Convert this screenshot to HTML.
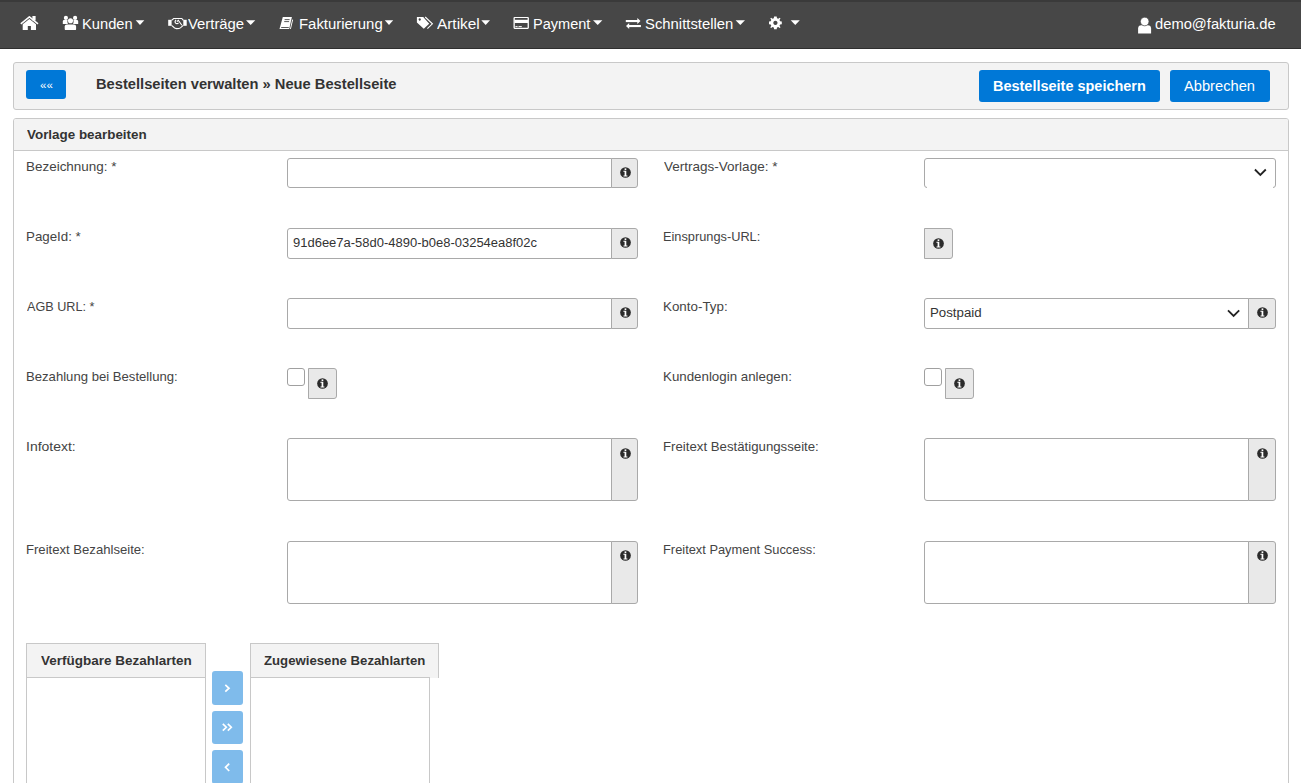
<!DOCTYPE html>
<html><head><meta charset="utf-8">
<style>
*{box-sizing:border-box}
html,body{margin:0;padding:0}
body{width:1301px;height:783px;overflow:hidden;position:relative;background:#fff;font-family:"Liberation Sans",sans-serif}
.a{position:absolute}
.tx{position:absolute;white-space:nowrap;line-height:1;transform-origin:0 0}
.btn{position:absolute;background:#0078d7;border-radius:3px}
.inp{position:absolute;background:#fff;border:1px solid #a9a9a9;border-radius:3px 0 0 3px}
.add{position:absolute;background:#e9e9e9;border:1px solid #a9a9a9;border-radius:0 3px 3px 0}
.ib{position:absolute;background:#e9e9e9;border:1px solid #a9a9a9;border-radius:0 3px 3px 0}
.cb{position:absolute;background:#fff;border:1px solid #a0a0a0;border-radius:3px;width:18px;height:18px}
.ic{position:absolute;width:11px;height:11px}
.lb{position:absolute;background:#0078d7;opacity:.5;border-radius:3px}
</style></head><body>
<!-- navbar -->
<div class="a" style="left:0;top:0;width:1301px;height:49px;background:#474747"></div>
<div class="a" style="left:0;top:0;width:1301px;height:2px;background:#3a3a3a"></div>
<div class="a" style="left:0;top:48px;width:1301px;height:1px;background:#2f2f2f"></div>
<svg class="a" style="left:0;top:0" width="1301" height="48" viewBox="0 0 1301 48">
<g fill="#fff">
<!-- home -->
<polyline points="20.8,23.8 29.4,16.9 38,23.8" fill="none" stroke="#fff" stroke-width="1.55" stroke-linejoin="round"/>
<rect x="32.4" y="16" width="3.2" height="4.5"/>
<polygon points="22.7,24.3 29.4,18.9 36,24.3 36,30 30.9,30 30.9,26 27.8,26 27.8,30 22.7,30"/>
<!-- users -->
<circle cx="65.9" cy="17.9" r="2.1"/>
<circle cx="75.1" cy="17.9" r="2.1"/>
<circle cx="70.5" cy="20.7" r="2.55"/>
<path d="M62.8 24.1 L62.8 21.2 Q62.8 19.9 64.1 19.9 L67.6 19.9 Q67.3 21 67.5 22.4 L67.9 24.1 Z"/>
<path d="M78.2 24.1 L78.2 21.2 Q78.2 19.9 76.9 19.9 L73.4 19.9 Q73.7 21 73.5 22.4 L73.1 24.1 Z"/>
<path d="M64.7 28.9 L64.7 26.6 Q64.7 24.4 66.9 24.4 L73.9 24.4 Q76.1 24.4 76.1 26.6 L76.1 28.9 Q76.1 30.1 74.9 30.1 L65.9 30.1 Q64.7 30.1 64.7 28.9 Z"/>
<!-- handshake -->
<rect x="168.2" y="19.8" width="3.4" height="6"/>
<rect x="183.3" y="19.8" width="3.4" height="6"/>
<g fill="none" stroke="#fff" stroke-width="1.1">
<path d="M171.6 20.4 L173.7 18.5 L181.8 18.5 L183.4 20.3"/>
<path d="M171.6 25.3 L174.6 27.9 L176.6 28.6 L179 28.5 L180.4 27.9 L183.3 25.4"/>
<path d="M176.1 19.9 Q174.3 21.5 175.6 23.1 Q177 24.2 178.6 22.9"/>
<path d="M176.9 21.7 L178.3 20.3 L181.9 25.3"/>
</g>
<!-- book -->
<polygon points="282.8,17.1 291.9,17.1 289.2,28.9 279.5,28.9"/>
<polygon points="292.2,19.4 293.1,19.8 290.9,28.9 290,28.9"/>
<g stroke="#474747" stroke-width="0.9"><line x1="284.6" y1="19.6" x2="289.6" y2="19.6"/><line x1="284.2" y1="21.6" x2="289.1" y2="21.6"/><line x1="281.2" y1="27.5" x2="288.8" y2="27.5"/></g>
<!-- tags -->
<path d="M416.9 16.9 L423.2 16.9 L429.2 23.8 L423.8 28.8 L416.9 22.6 Z M419.7 18.6 A0.9 0.9 0 1 0 419.71 18.6 Z" fill-rule="evenodd"/>
<circle cx="419.7" cy="19.5" r="0.95" fill="#474747"/>
<polyline points="425.2,17 432.4,23.8 427.4,28.6" fill="none" stroke="#fff" stroke-width="1.1"/>
<!-- credit card -->
<path fill-rule="evenodd" d="M514.6 16.9 L527.8 16.9 Q528.9 16.9 528.9 18 L528.9 27.8 Q528.9 28.9 527.8 28.9 L514.6 28.9 Q513.5 28.9 513.5 27.8 L513.5 18 Q513.5 16.9 514.6 16.9 Z M514.8 18.1 L514.8 27.7 L527.6 27.7 L527.6 18.1 Z"/>
<rect x="514.5" y="19.8" width="13.5" height="3.2"/>
<rect x="515.4" y="26.1" width="2.2" height="1"/>
<rect x="518.5" y="26.1" width="3.3" height="1"/>
<!-- exchange -->
<rect x="625.8" y="20" width="12.2" height="2.1"/>
<polygon points="637.3,18.1 640.5,21.05 637.3,24"/>
<rect x="628.6" y="25" width="12.3" height="2.1"/>
<polygon points="629.2,23.1 626,26.05 629.2,29"/>
<!-- gear -->
<g transform="translate(775.4 22.9)">
<path fill-rule="evenodd" d="M-1.3 -6.4 L1.3 -6.4 L1.6 -4.7 L2.9 -4.1 L4.3 -5.1 L5.1 -4.3 L4.1 -2.9 L4.7 -1.6 L6.4 -1.3 L6.4 1.3 L4.7 1.6 L4.1 2.9 L5.1 4.3 L4.3 5.1 L2.9 4.1 L1.6 4.7 L1.3 6.4 L-1.3 6.4 L-1.6 4.7 L-2.9 4.1 L-4.3 5.1 L-5.1 4.3 L-4.1 2.9 L-4.7 1.6 L-6.4 1.3 L-6.4 -1.3 L-4.7 -1.6 L-4.1 -2.9 L-5.1 -4.3 L-4.3 -5.1 L-2.9 -4.1 L-1.6 -4.7 Z M0 -2.1 A2.1 2.1 0 1 0 0.01 -2.1 Z"/>
</g>
<!-- carets -->
<polygon points="135.7,20.2 144.3,20.2 140,24.9"/>
<polygon points="246,20.2 255.3,20.2 250.65,24.9"/>
<polygon points="384.8,20.2 393.2,20.2 389,24.9"/>
<polygon points="481.3,20.2 490,20.2 485.65,24.9"/>
<polygon points="593,20.2 602.4,20.2 597.7,24.9"/>
<polygon points="735.6,20.2 745,20.2 740.3,24.9"/>
<polygon points="790.7,20.2 799.8,20.2 795.25,25.1"/>
<!-- user -->
<path d="M1138.1 33.4 L1138.1 28.6 Q1138.1 25.2 1141.5 25.2 L1147.7 25.2 Q1151.1 25.2 1151.1 28.6 L1151.1 33.4 Z"/>
<circle cx="1144.7" cy="21.5" r="4.3" stroke="#474747" stroke-width="0.7"/>
</g>
</svg>
<!-- top panel -->
<div class="a" style="left:13px;top:62px;width:1276px;height:48px;background:#f3f3f3;border:1px solid #c8c8c8;border-radius:3px"></div>
<div class="btn" style="left:26px;top:70px;width:40px;height:29px"></div>
<div class="btn" style="left:979px;top:70px;width:181px;height:32px"></div>
<div class="btn" style="left:1170px;top:70px;width:100px;height:32px"></div>
<!-- card -->
<div class="a" style="left:13px;top:118px;width:1276px;height:700px;background:#fff;border:1px solid #c8c8c8;border-radius:3px"></div>
<div class="a" style="left:14px;top:119px;width:1274px;height:32px;background:#f3f3f3;border-bottom:1px solid #c8c8c8;border-radius:2px 2px 0 0"></div>
<!-- left col -->
<div class="inp" style="left:287px;top:158px;width:325px;height:30px"></div>
<div class="add" style="left:611px;top:158px;width:27px;height:30px"></div>
<div class="inp" style="left:287px;top:228px;width:325px;height:31px"></div>
<div class="add" style="left:611px;top:228px;width:27px;height:31px"></div>
<div class="inp" style="left:287px;top:298px;width:325px;height:31px"></div>
<div class="add" style="left:611px;top:298px;width:27px;height:31px"></div>
<div class="cb" style="left:287px;top:368px"></div>
<div class="ib" style="left:308px;top:368px;width:29px;height:31px"></div>
<div class="inp" style="left:287px;top:438px;width:325px;height:63px"></div>
<div class="add" style="left:611px;top:438px;width:27px;height:63px"></div>
<div class="inp" style="left:287px;top:541px;width:325px;height:63px"></div>
<div class="add" style="left:611px;top:541px;width:27px;height:63px"></div>
<!-- right col -->
<div class="a" style="left:924px;top:158px;width:352px;height:30px;border:1px solid #a9a9a9;border-radius:3px"></div>
<div class="a" style="left:927px;top:187px;width:346px;height:1px;background:#fff"></div>
<div class="ib" style="left:924px;top:228px;width:29px;height:31px"></div>
<div class="inp" style="left:924px;top:298px;width:325px;height:31px"></div>
<div class="add" style="left:1248px;top:298px;width:28px;height:31px"></div>
<div class="cb" style="left:924px;top:368px"></div>
<div class="ib" style="left:945px;top:368px;width:29px;height:31px"></div>
<div class="inp" style="left:924px;top:438px;width:325px;height:63px"></div>
<div class="add" style="left:1248px;top:438px;width:28px;height:63px"></div>
<div class="inp" style="left:924px;top:541px;width:325px;height:63px"></div>
<div class="add" style="left:1248px;top:541px;width:28px;height:63px"></div>
<!-- dual list -->
<div class="a" style="left:26px;top:643px;width:180px;height:200px;border:1px solid #c8c8c8;background:#fff"></div>
<div class="a" style="left:26px;top:643px;width:180px;height:35px;border:1px solid #c8c8c8;background:#f3f3f3"></div>
<div class="a" style="left:250px;top:677px;width:180px;height:200px;border:1px solid #c8c8c8;background:#fff"></div>
<div class="a" style="left:250px;top:643px;width:189px;height:35px;border:1px solid #c8c8c8;border-bottom:none;background:#f3f3f3"></div>
<div class="a" style="left:251px;top:677px;width:179px;height:1px;background:#c8c8c8"></div>
<div class="lb" style="left:212px;top:671px;width:31px;height:34px"></div>
<div class="lb" style="left:212px;top:711px;width:31px;height:33px"></div>
<div class="lb" style="left:212px;top:750px;width:31px;height:34px"></div>
<svg width="0" height="0" style="position:absolute"><defs><symbol id="info" viewBox="0 0 11 11"><circle cx="5.5" cy="5.5" r="5.35" fill="#2b2b2b"/><rect x="4.6" y="1.4" width="1.7" height="1.6" fill="#fff"/><path d="M3.4 3.7 H6.3 V8.4 H7.4 V9.5 H3.5 V8.4 H4.6 V4.8 H3.4 Z" fill="#fff"/></symbol></defs></svg>
<svg class="ic" style="left:619.8px;top:166.8px" viewBox="0 0 11 11"><use href="#info"/></svg><svg class="ic" style="left:619.8px;top:236.8px" viewBox="0 0 11 11"><use href="#info"/></svg><svg class="ic" style="left:619.8px;top:306.8px" viewBox="0 0 11 11"><use href="#info"/></svg><svg class="ic" style="left:619.8px;top:447.8px" viewBox="0 0 11 11"><use href="#info"/></svg><svg class="ic" style="left:619.8px;top:549.8px" viewBox="0 0 11 11"><use href="#info"/></svg><svg class="ic" style="left:316.8px;top:377.8px" viewBox="0 0 11 11"><use href="#info"/></svg><svg class="ic" style="left:954.0px;top:377.8px" viewBox="0 0 11 11"><use href="#info"/></svg><svg class="ic" style="left:933.0px;top:237.8px" viewBox="0 0 11 11"><use href="#info"/></svg><svg class="ic" style="left:1256.5px;top:306.8px" viewBox="0 0 11 11"><use href="#info"/></svg><svg class="ic" style="left:1256.5px;top:447.8px" viewBox="0 0 11 11"><use href="#info"/></svg><svg class="ic" style="left:1256.5px;top:549.8px" viewBox="0 0 11 11"><use href="#info"/></svg>
<svg class="a" style="left:0;top:0" width="1301" height="783" viewBox="0 0 1301 783">
<g fill="none" stroke="#222" stroke-width="1.8" stroke-linecap="butt" stroke-linejoin="miter">
<polyline points="1254.9,169.5 1260.35,174.9 1265.8,169.5"/>
<polyline points="1228,310.4 1233.6,316 1239.2,310.4"/>
</g>
<g fill="none" stroke="#fff" stroke-width="1.7">
<polyline points="225.3,684.9 229,688.25 225.3,691.6"/>
<polyline points="222.8,723.8 226.3,727.25 222.8,730.7"/>
<polyline points="227.8,723.8 231.3,727.25 227.8,730.7"/>
<polyline points="229.2,763.6 225.5,767.3 229.2,771"/>
</g>
</svg>
<div class="tx" style="left:82.22px;top:17.00px;font-size:14px;font-weight:normal;color:#fff;transform:scaleX(1.0492);">Kunden</div>
<div class="tx" style="left:187.56px;top:17.00px;font-size:14px;font-weight:normal;color:#fff;transform:scaleX(1.0603);">Verträge</div>
<div class="tx" style="left:298.50px;top:17.00px;font-size:14px;font-weight:normal;color:#fff;transform:scaleX(1.0650);">Fakturierung</div>
<div class="tx" style="left:437.05px;top:17.00px;font-size:14px;font-weight:normal;color:#fff;transform:scaleX(1.0973);">Artikel</div>
<div class="tx" style="left:532.93px;top:17.00px;font-size:14px;font-weight:normal;color:#fff;transform:scaleX(1.0385);">Payment</div>
<div class="tx" style="left:645.39px;top:17.00px;font-size:14px;font-weight:normal;color:#fff;transform:scaleX(1.0602);">Schnittstellen</div>
<div class="tx" style="left:1154.90px;top:17.00px;font-size:14px;font-weight:normal;color:#fff;transform:scaleX(1.0524);">demo@fakturia.de</div>
<div class="tx" style="left:95.61px;top:77.00px;font-size:14px;font-weight:bold;color:#333;transform:scaleX(1.0493);">Bestellseiten verwalten » Neue Bestellseite</div>
<div class="tx" style="left:993.42px;top:79.00px;font-size:14px;font-weight:bold;color:#fff;transform:scaleX(1.0336);">Bestellseite speichern</div>
<div class="tx" style="left:1184.16px;top:79.00px;font-size:14px;font-weight:normal;color:#fff;transform:scaleX(1.0480);">Abbrechen</div>
<div class="tx" style="left:39.88px;top:80.00px;font-size:11px;font-weight:normal;color:#fff;transform:scaleX(1.0467);">««</div>
<div class="tx" style="left:26.94px;top:128.00px;font-size:13px;font-weight:bold;color:#333;transform:scaleX(1.0310);">Vorlage bearbeiten</div>
<div class="tx" style="left:26.35px;top:160.00px;font-size:13px;font-weight:normal;color:#444;transform:scaleX(1.0346);">Bezeichnung: *</div>
<div class="tx" style="left:26.36px;top:230.00px;font-size:13px;font-weight:normal;color:#444;transform:scaleX(1.0246);">PageId: *</div>
<div class="tx" style="left:26.98px;top:300.00px;font-size:13px;font-weight:normal;color:#444;transform:scaleX(0.9718);">AGB URL: *</div>
<div class="tx" style="left:26.38px;top:370.00px;font-size:13px;font-weight:normal;color:#444;transform:scaleX(1.0089);">Bezahlung bei Bestellung:</div>
<div class="tx" style="left:26.27px;top:440.00px;font-size:13px;font-weight:normal;color:#444;transform:scaleX(1.0759);">Infotext:</div>
<div class="tx" style="left:26.38px;top:543.00px;font-size:13px;font-weight:normal;color:#444;transform:scaleX(1.0078);">Freitext Bezahlseite:</div>
<div class="tx" style="left:663.83px;top:160.00px;font-size:13px;font-weight:normal;color:#444;transform:scaleX(1.0395);">Vertrags-Vorlage: *</div>
<div class="tx" style="left:663.30px;top:230.00px;font-size:13px;font-weight:normal;color:#444;transform:scaleX(0.9825);">Einsprungs-URL:</div>
<div class="tx" style="left:663.26px;top:300.00px;font-size:13px;font-weight:normal;color:#444;transform:scaleX(1.0281);">Konto-Typ:</div>
<div class="tx" style="left:663.26px;top:370.00px;font-size:13px;font-weight:normal;color:#444;transform:scaleX(1.0243);">Kundenlogin anlegen:</div>
<div class="tx" style="left:663.27px;top:440.00px;font-size:13px;font-weight:normal;color:#444;transform:scaleX(1.0170);">Freitext Bestätigungsseite:</div>
<div class="tx" style="left:663.30px;top:543.00px;font-size:13px;font-weight:normal;color:#444;transform:scaleX(0.9883);">Freitext Payment Success:</div>
<div class="tx" style="left:293.09px;top:237.00px;font-size:12.5px;font-weight:normal;color:#333;transform:scaleX(1.0387);">91d6ee7a-58d0-4890-b0e8-03254ea8f02c</div>
<div class="tx" style="left:929.83px;top:307.00px;font-size:12.5px;font-weight:normal;color:#333;transform:scaleX(1.0614);">Postpaid</div>
<div class="tx" style="left:41.04px;top:654.00px;font-size:13px;font-weight:bold;color:#333;transform:scaleX(1.0373);">Verfügbare Bezahlarten</div>
<div class="tx" style="left:263.95px;top:654.00px;font-size:13px;font-weight:bold;color:#333;transform:scaleX(1.0150);">Zugewiesene Bezahlarten</div>
</body></html>
